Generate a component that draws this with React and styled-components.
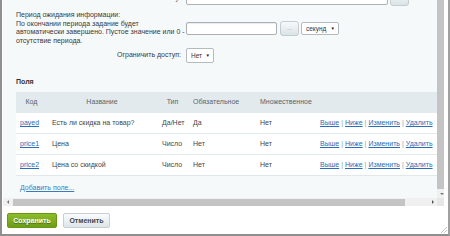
import React from "react";
import styled, { createGlobalStyle } from "styled-components";

const fields = [
  { code: "payed", name: "Есть ли скидка на товар?", type: "Да/Нет", required: "Да", multiple: "Нет" },
  { code: "price1", name: "Цена", type: "Число", required: "Нет", multiple: "Нет" },
  { code: "price2", name: "Цена со скидкой", type: "Число", required: "Нет", multiple: "Нет" },
];

const App = () => {
  return (
    <>
      <GlobalStyle />
      <Window>
        <ScrollArea>
          <Viewport>
            <Content>
              <FormRow $mt={-10}>
                <Label>Ответственному:</Label>
                <TextInput $w={202} />
                <DotsButton $ml={2} />
              </FormRow>
              <FormRow $mt={5}>
                <Label $left>
                  Период ожидания информации:
                  <br />
                  По окончании периода задание будет
                  <br />
                  автоматически завершено. Пустое значение или 0 -
                  <br />
                  отсутствие периода.
                </Label>
                <TextInput $w={91} />
                <DotsButton $ml={3}>...</DotsButton>
                <Select $w={38} $h={13}>
                  секунд <Caret>▼</Caret>
                </Select>
              </FormRow>
              <FormRow $mt={2}>
                <Label>Ограничить доступ:</Label>
                <Select $w={28} $h={15} $ml={0}>
                  Нет <Caret>▼</Caret>
                </Select>
              </FormRow>

              <SectionTitle>Поля</SectionTitle>

              <Table>
                <HeadRow>
                  <HeadCell $center>Код</HeadCell>
                  <HeadCell $center>Название</HeadCell>
                  <HeadCell $center>Тип</HeadCell>
                  <HeadCell>Обязательное</HeadCell>
                  <HeadCell>Множественное</HeadCell>
                  <HeadCell />
                </HeadRow>
                {fields.map((f) => (
                  <BodyRow key={f.code}>
                    <Cell $pl={4}>
                      <Link>{f.code}</Link>
                    </Cell>
                    <Cell>{f.name}</Cell>
                    <Cell>{f.type}</Cell>
                    <Cell>{f.required}</Cell>
                    <Cell>{f.multiple}</Cell>
                    <Cell>
                      <Link>Выше</Link>
                      <Pipe>|</Pipe>
                      <Link>Ниже</Link>
                      <Pipe>|</Pipe>
                      <Link>Изменить</Link>
                      <Pipe>|</Pipe>
                      <Link>Удалить</Link>
                    </Cell>
                  </BodyRow>
                ))}
              </Table>

              <AddLink>Добавить поле...</AddLink>
            </Content>
          </Viewport>

          <VScroll>
            <VThumb />
            <ArrowButton>
              <Triangle $dir="down" />
            </ArrowButton>
          </VScroll>

          <HScroll>
            <ArrowButton>
              <Triangle $dir="left" />
            </ArrowButton>
            <HThumb />
            <ArrowButton $end>
              <Triangle $dir="right" />
            </ArrowButton>
          </HScroll>
          <Corner />
        </ScrollArea>

        <Footer>
          <SaveButton>Сохранить</SaveButton>
          <CancelButton>Отменить</CancelButton>
          <Grip viewBox="0 0 6 6" width="6" height="6">
            <path d="M6 0 L0 6 M6 3 L3 6" stroke="#b5b5b5" strokeWidth="0.8" />
          </Grip>
        </Footer>
      </Window>
    </>
  );
};

const GlobalStyle = createGlobalStyle`
  html, body {
    margin: 0;
    padding: 0;
    background: #fff;
    overflow: hidden;
  }
  body {
    font-family: "Liberation Sans", Arial, sans-serif;
  }
`;

const Window = styled.div`
  box-sizing: border-box;
  width: 450px;
  height: 236px;
  background: #fff;
  border-left: 2px solid #8f8f8f;
  border-right: 2px solid #a0a0a0;
  border-bottom: 2px solid #8f8f8f;
  padding: 0 4px 0 1px;
  display: flex;
  flex-direction: column;
`;

const ScrollArea = styled.div`
  display: grid;
  grid-template-columns: 1fr 7px;
  grid-template-rows: 198px 8px;
`;

const Viewport = styled.div`
  overflow: hidden;
  background: #f5f9f9;
`;

const Content = styled.div`
  box-sizing: border-box;
  width: 470px;
  padding-left: 13px;
  font-size: 7px;
  color: #333;
`;

const FormRow = styled.div`
  display: flex;
  align-items: center;
  margin-top: ${(p) => p.$mt}px;
  min-height: 16px;
`;

const Label = styled.div`
  box-sizing: border-box;
  flex: none;
  width: 170px;
  padding-right: ${(p) => (p.$left ? 0 : 5)}px;
  text-align: ${(p) => (p.$left ? "left" : "right")};
  line-height: 8.7px;
  white-space: nowrap;
  color: #3a3a3a;
`;

const TextInput = styled.div`
  box-sizing: border-box;
  width: ${(p) => p.$w}px;
  height: 13px;
  background: #fff;
  border: 1px solid #a9b1b4;
  border-radius: 2px;
  box-shadow: inset 0 1px 1px #e6eaec;
`;

const DotsButton = styled.div`
  box-sizing: border-box;
  width: 19px;
  height: 15px;
  margin-left: ${(p) => p.$ml}px;
  border: 1px solid #c3ccd0;
  border-radius: 3px;
  background: linear-gradient(#f7f9fa, #dbe3e6);
  color: #8a9499;
  font-size: 6px;
  display: flex;
  align-items: center;
  justify-content: center;
`;

const Select = styled.div`
  box-sizing: border-box;
  width: ${(p) => p.$w}px;
  height: ${(p) => p.$h}px;
  margin-left: ${(p) => (p.$ml === undefined ? 2 : p.$ml)}px;
  padding: 0 3px 0 4px;
  border: 1px solid #b3bbbe;
  border-radius: 2px;
  background: #fff;
  color: #333;
  font-size: 6.5px;
  display: flex;
  align-items: center;
  justify-content: space-between;
`;

const Caret = styled.span`
  font-size: 4.5px;
  color: #222;
`;

const SectionTitle = styled.div`
  margin-top: 14px;
  line-height: 8px;
  font-size: 7px;
  font-weight: bold;
  color: #333;
`;

const Table = styled.div`
  margin-top: 6px;
  width: 440px;
  background: #fff;
  border-bottom: 1px solid #e1e8eb;
`;

const Row = styled.div`
  display: grid;
  grid-template-columns: 31px 110px 31px 67px 60px 1fr;
  align-items: center;
`;

const HeadRow = styled(Row)`
  height: 20px;
  background: #e3eaed;
  color: #56666c;
`;

const BodyRow = styled(Row)`
  height: 20px;
  border-top: 1px solid #e4ebee;
  color: #3c474c;
`;

const HeadCell = styled.div`
  padding-left: ${(p) => (p.$center ? 0 : 5)}px;
  text-align: ${(p) => (p.$center ? "center" : "left")};
  white-space: nowrap;
`;

const Cell = styled.div`
  padding-left: ${(p) => (p.$pl === undefined ? 5 : p.$pl)}px;
  white-space: nowrap;
`;

const Link = styled.span`
  color: #2b6db6;
  text-decoration: underline;
`;

const Pipe = styled.span`
  color: #8aa0ad;
  margin: 0 2px;
`;

const AddLink = styled(Link)`
  display: block;
  margin: 8px 0 0 4px;
  line-height: 8px;
  color: #3a7bc0;
`;

const VScroll = styled.div`
  display: flex;
  flex-direction: column;
  background: #f0f0f0;
`;

const VThumb = styled.div`
  flex: 1;
  background: #c4c4c4;
`;

const HScroll = styled.div`
  display: flex;
  align-items: center;
  background: #f0f0f0;
`;

const HThumb = styled.div`
  width: 392px;
  height: 7px;
  margin-left: 1px;
  background: #c4c4c4;
`;

const ArrowButton = styled.div`
  flex: none;
  width: 9px;
  height: 9px;
  margin-left: ${(p) => (p.$end ? "auto" : "0")};
  display: flex;
  align-items: center;
  justify-content: center;
`;

const Triangle = styled.div`
  width: 0;
  height: 0;
  border: 2px solid transparent;
  ${(p) =>
    p.$dir === "down"
      ? "border-top: 2px solid #777; border-bottom-width: 0;"
      : p.$dir === "left"
      ? "border-right: 2px solid #777; border-left-width: 0;"
      : "border-left: 2px solid #555; border-right-width: 0;"}
`;

const Corner = styled.div`
  background: #e6e6e6;
`;

const Footer = styled.div`
  flex: 1;
  display: flex;
  align-items: flex-start;
  gap: 6px;
  padding: 7px 0 0 4px;
`;

const BaseButton = styled.div`
  box-sizing: border-box;
  height: 15px;
  border-radius: 2px;
  font-size: 7px;
  font-weight: bold;
  display: flex;
  align-items: center;
  justify-content: center;
`;

const SaveButton = styled(BaseButton)`
  width: 50px;
  border: 1px solid #6a9618;
  background: linear-gradient(#8dbd2c, #6b9c15);
  color: #fff;
  text-shadow: 0 1px 0 #4d7310;
`;

const CancelButton = styled(BaseButton)`
  width: 47px;
  border: 1px solid #c6cfd2;
  background: linear-gradient(#fbfcfc, #dde5e8);
  color: #3f4a4f;
`;

const Grip = styled.svg`
  margin-left: auto;
  margin-right: -3px;
  align-self: flex-end;
  margin-bottom: 1px;
`;

export default App;
